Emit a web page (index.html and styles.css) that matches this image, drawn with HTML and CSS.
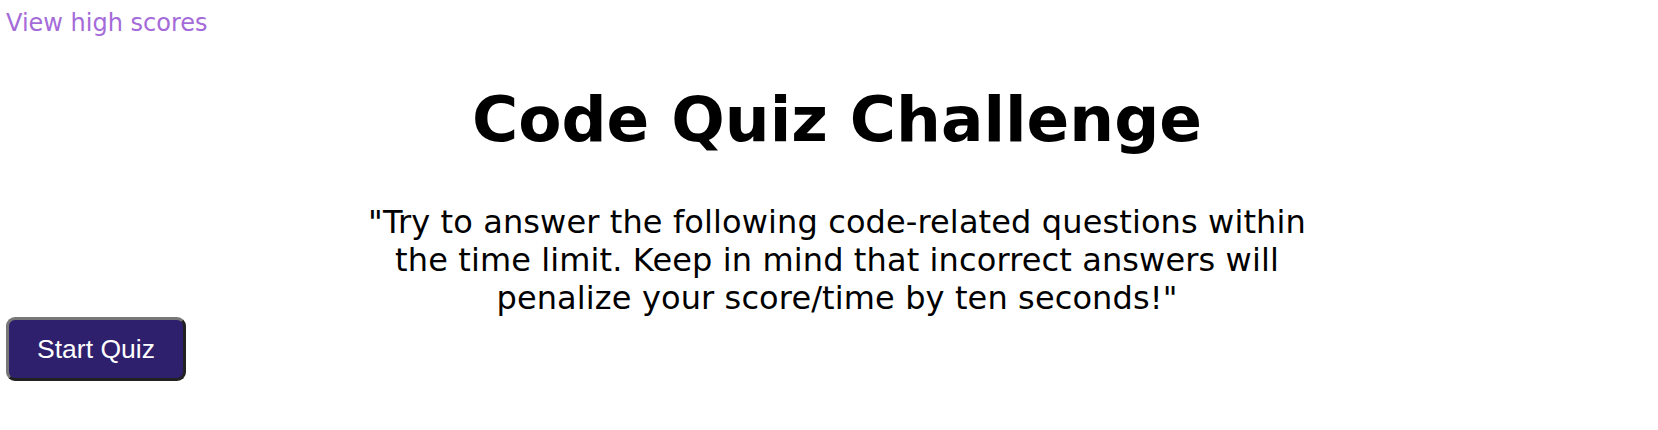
FILE: index.html
```html
<!DOCTYPE html>
<html lang="en">
<head>
<meta charset="utf-8">
<title>Code Quiz</title>
<link rel="stylesheet" href="styles.css">
</head>
<body>
<header class="top-bar">
  <a class="scores-link" href="#">View high scores</a>
</header>
<main class="intro">
  <h1 class="title">Code Quiz Challenge</h1>
  <p class="blurb">"Try to answer the following code-related questions within the time limit. Keep in mind that incorrect answers will penalize your score/time by ten seconds!"</p>
</main>
<div class="actions">
  <button class="start-btn" type="button">Start Quiz</button>
</div>
</body>
</html>
```

FILE: styles.css
```css
html, body {
  margin: 0;
  padding: 0;
  background: #ffffff;
}

body {
  font-family: "DejaVu Sans", Verdana, sans-serif;
  color: #000000;
  line-height: normal;
}

.top-bar {
  padding: 9px 6px 0 6px;
}

.scores-link {
  font-size: 24px;
  color: #a46bd9;
  text-decoration: none;
}

.intro {
  display: flex;
  flex-direction: column;
  align-items: center;
  padding-left: 16px;
}

.title {
  font-size: 63px;
  font-weight: bold;
  margin: 46px 0 0 0;
}

.blurb {
  font-size: 32px;
  letter-spacing: 0.12px;
  text-align: center;
  width: 960px;
  margin: 47px 0 0 0;
}

.actions {
  display: flex;
  padding: 0 6px;
}

.start-btn {
  font-family: "Liberation Sans", Arial, sans-serif;
  font-size: 26.5px;
  color: #ffffff;
  background: #2f206d;
  width: 180px;
  height: 64px;
  padding: 0;
  border-width: 3px;
  border-style: solid;
  border-color: #777777 #222222 #222222 #777777;
  border-radius: 9px;
  cursor: pointer;
}
```
